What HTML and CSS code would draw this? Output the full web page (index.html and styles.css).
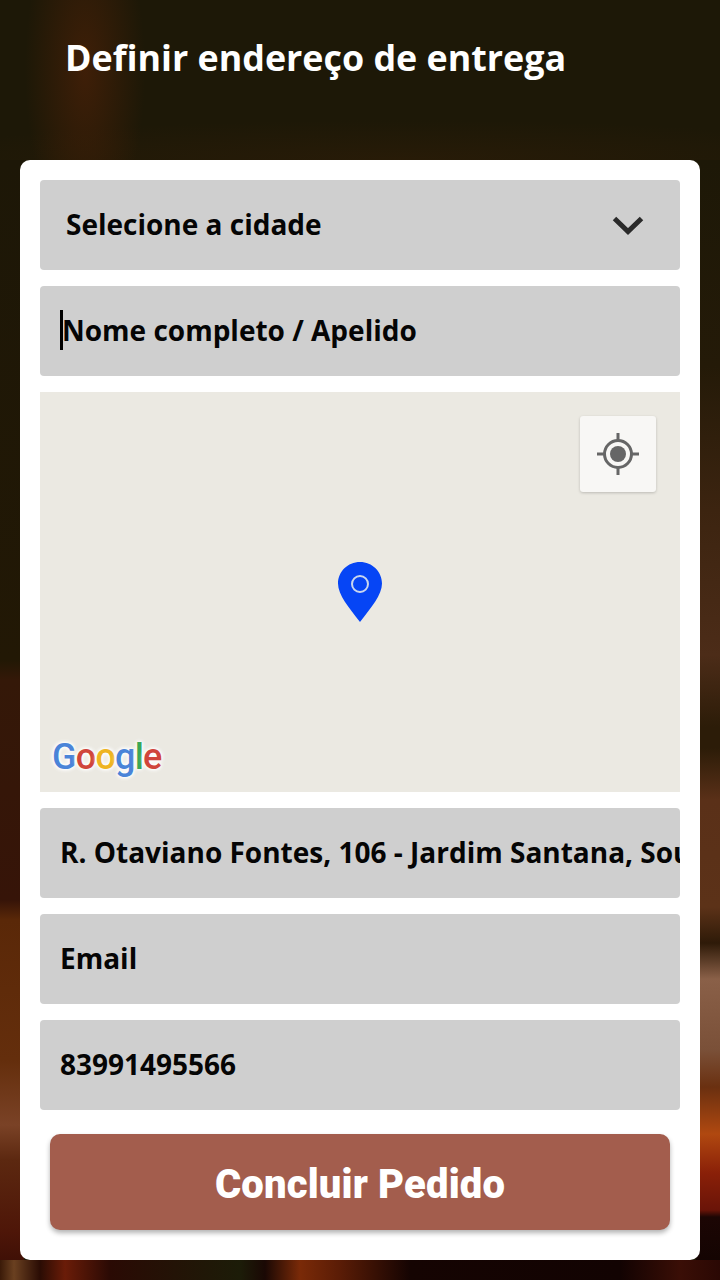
FILE: index.html
```html
<!DOCTYPE html>
<html lang="pt-BR">
<head>
    <meta charset="UTF-8">
    <meta name="viewport" content="width=device-width, initial-scale=1.0">
    <title>Definir endereço de entrega</title>
    <link rel="stylesheet" href="styles.css">
</head>
<body>
    <header class="page-header">
        <h1>Definir endereço de entrega</h1>
    </header>
    <main class="card">
        <div class="field field-select">
            <span>Selecione a cidade</span>
            <svg class="chevron" width="32" height="20" viewBox="0 0 32 20">
                <path d="M2.5 2.5 L16 15.5 L29.5 2.5" fill="none" stroke="#2a2a2a" stroke-width="5"/>
            </svg>
        </div>
        <div class="field field-caret"><span class="caret"></span><span>Nome completo / Apelido</span></div>
        <div class="map">
            <div class="locate">
                <svg width="44" height="44" viewBox="0 0 44 44">
                    <circle cx="22" cy="22" r="13.5" fill="none" stroke="#666" stroke-width="3"/>
                    <circle cx="22" cy="22" r="8" fill="#666"/>
                    <path d="M22 1 V9 M22 35 V43 M1 22 H9 M35 22 H43" stroke="#666" stroke-width="3"/>
                </svg>
            </div>
            <svg class="pin" width="44" height="60" viewBox="0 0 44 60">
                <path d="M22 0 C9.8 0 0 9.6 0 21.6 C0 33 11 46 22 60 C33 46 44 33 44 21.6 C44 9.6 34.2 0 22 0 Z" fill="#0645f5"/>
                <circle cx="22" cy="22" r="8" fill="none" stroke="#c9d6ee" stroke-width="2"/>
            </svg>
            <div class="google">
                <span class="g-blue">G</span><span class="g-red">o</span><span class="g-yellow">o</span><span class="g-blue">g</span><span class="g-green">l</span><span class="g-red">e</span>
            </div>
        </div>
        <div class="field"><span class="nowrap">R. Otaviano Fontes, 106 - Jardim Santana, Sousa - PB, Brasil</span></div>
        <div class="field"><span>Email</span></div>
        <div class="field"><span>83991495566</span></div>
        <button class="submit">Concluir Pedido</button>
    </main>
</body>
</html>
```

FILE: styles.css
```css
* {
    box-sizing: border-box;
}
html, body {
    height: 100%;
}
body {
    margin: 0;
    width: 720px;
    height: 1280px;
    overflow: hidden;
    font-family: 'Open Sans', sans-serif;
    background-color: #1d1807;
    background-image:
        /* bottom strip under the card */
        linear-gradient(90deg, #3a1a08 0, #6a4020 14px, #2a0c04 40px, #6a1c08 65px, #2a0a04 110px, #1c1c08 240px, #1a0804 265px, #7a2a08 300px, #5a1c06 340px, #150402 410px, #120302 620px, #3a0e06 680px, #2a0804 720px),
        /* left edge */
        linear-gradient(180deg, #1d1707 0, #221805 500px, #341808 520px, #361408 740px, #5a2808 760px, #642e0c 900px, #7a4226 965px, #5c2810 1000px, #4e1608 1071px, #401006 1100px),
        /* right edge */
        linear-gradient(180deg, #1d1807 0, #241a08 206px, #3c2410 350px, #4c2c18 495px, #2c1c08 567px, #2c1c08 588px, #5a3018 640px, #5c3218 747px, #2e1a08 783px, #8a6048 819px, #7a5038 890px, #6a3010 927px, #b04810 974px, #8a2008 1013px, #6a1408 1050px, #1c0604 1057px, #140402 1100px),
        /* warm glow behind the title */
        radial-gradient(ellipse 60px 170px at 85px 70px, rgba(90, 36, 8, 0.55), transparent),
        radial-gradient(ellipse 500px 40px at 400px 160px, rgba(50, 30, 8, 0.5), transparent);
    background-size: 100% 20px, 24px 1100px, 24px 1100px, 100% 160px, 100% 160px;
    background-position: 0 100%, 0 160px, 100% 160px, 0 0, 0 0;
    background-repeat: no-repeat;
}
.page-header {
    height: 160px;
    padding: 35px 0 0 65px;
}
h1 {
    margin: 0;
    color: #fff;
    font-size: 35.85px;
    line-height: 46px;
    font-weight: 700;
}
.card {
    margin: 0 20px;
    height: 1100px;
    padding: 20px;
    background: #fff;
    border-radius: 10px;
    display: flex;
    flex-direction: column;
    gap: 16px;
}
.field {
    height: 90px;
    flex: none;
    padding: 0 0 2px 20px;
    background: #cfcfcf;
    border-radius: 4px;
    display: flex;
    align-items: center;
    overflow: hidden;
    font-size: 28px;
    font-weight: 700;
    color: #050505;
}
.nowrap {
    white-space: nowrap;
}
.field-select {
    padding: 0 36px 2px 26px;
    justify-content: space-between;
}
.chevron {
    margin-top: 3px;
}
.caret {
    width: 3px;
    height: 40px;
    background: #000;
    margin-right: -1px;
    flex: none;
}
.map {
    position: relative;
    height: 400px;
    flex: none;
    background: #ebe9e2;
}
.locate {
    position: absolute;
    top: 24px;
    right: 24px;
    width: 76px;
    height: 76px;
    background: #f8f7f5;
    border-radius: 3px;
    box-shadow: 0 1px 3px rgba(0, 0, 0, 0.2);
    display: flex;
    align-items: center;
    justify-content: center;
}
.pin {
    position: absolute;
    left: 298px;
    top: 170px;
}
.google {
    position: absolute;
    left: 12px;
    top: 342px;
    font-family: Roboto, sans-serif;
    font-size: 36px;
    font-weight: 500;
    line-height: 46px;
    letter-spacing: -0.8px;
    text-shadow: 0 0 3px #fff, 0 0 5px #fff, 0 0 5px #fff;
}
.g-blue { color: #4a84d8; }
.g-red { color: #d0453b; }
.g-yellow { color: #eeb422; }
.g-green { color: #3aa757; }
.submit {
    margin: 8px 10px 0;
    height: 96px;
    flex: none;
    padding: 4px 0 0;
    border: none;
    border-radius: 10px;
    background: #a35d4d;
    color: #fff;
    font-family: Roboto, sans-serif;
    font-size: 40px;
    font-weight: 900;
    letter-spacing: 0.15px;
    box-shadow: 0 3px 5px rgba(0, 0, 0, 0.3);
}
```
